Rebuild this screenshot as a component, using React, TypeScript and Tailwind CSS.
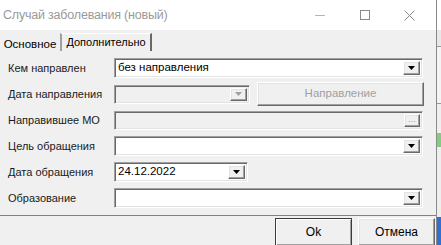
const font = "font-['Liberation_Sans',Arial,sans-serif]";

const sunken =
  "border border-t-[#a0a0a0] border-l-[#a0a0a0] border-b-[#ffffff] border-r-[#ffffff] shadow-[inset_1px_1px_0_#696969,inset_-1px_-1px_0_#e3e3e3]";

const raised =
  "border border-t-[#ffffff] border-l-[#ffffff] border-b-[#696969] border-r-[#696969] shadow-[inset_-1px_-1px_0_#a0a0a0,inset_1px_1px_0_#e3e3e3] bg-[#f0f0f0]";

function Arrow({ disabled }: { disabled?: boolean }) {
  return (
    <svg width="7" height="4" viewBox="0 0 7 4">
      <path d="M0 0h7L3.5 4z" fill={disabled ? "#a0a0a0" : "#000"} />
    </svg>
  );
}

function DropBtn({ disabled }: { disabled?: boolean }) {
  return (
    <div className={`${raised} flex h-full w-[17px] shrink-0 items-center justify-center`}>
      <Arrow disabled={disabled} />
    </div>
  );
}

function Combo({
  value,
  className,
  disabled,
}: {
  value?: string;
  className?: string;
  disabled?: boolean;
}) {
  return (
    <div
      className={`${sunken} ${className} flex items-stretch p-[2px] ${
        disabled ? "bg-[#f0f0f0]" : "bg-white"
      }`}
    >
      <div className="flex flex-1 items-center pl-[1px] text-[11.5px] leading-none text-black">
        {value}
      </div>
      <DropBtn disabled={disabled} />
    </div>
  );
}

function Row({ label, children }: { label: string; children: React.ReactNode }) {
  return (
    <div className="flex h-[26px] items-center">
      <div className="w-[114px] shrink-0 pl-[8px] text-[11px] text-[#1a1a1a]">{label}</div>
      {children}
    </div>
  );
}

export default function App() {
  return (
    <div className={`${font} flex h-[245px] w-[441px] overflow-hidden bg-[#f0f0f0]`}>
      <div className="flex w-[437px] shrink-0 flex-col border-r border-[#8a8a8a]">
        {/* title bar */}
        <div className="flex h-[30px] shrink-0 items-center bg-white">
          <span className="pl-[3px] text-[12.5px] tracking-[-0.2px] text-[#9a9a9a]">
            Случай заболевания (новый)
          </span>
          <div className="ml-auto flex h-full items-center pr-[4px]">
            <div className="flex w-[45px] justify-center">
              <div className="h-px w-[10px] bg-[#b5b5b5]" />
            </div>
            <div className="flex w-[45px] justify-center">
              <div className="h-[10px] w-[10px] border border-[#8a8a8a]" />
            </div>
            <div className="flex w-[45px] justify-center">
              <svg width="11" height="11" viewBox="0 0 11 11">
                <path d="M0.5 0.5l10 10M10.5 0.5l-10 10" stroke="#8a8a8a" strokeWidth="1" />
              </svg>
            </div>
          </div>
        </div>

        {/* tabs */}
        <div className="flex h-[25px] shrink-0 items-end">
          <div className="flex h-[24px] w-[60px] items-start justify-center pt-[5px] text-[11.5px] text-black">
            Основное
          </div>
          <div className="mb-[4px] flex h-[18px] w-[92px] items-center justify-center border-l-2 border-r-2 border-t border-l-[#a0a0a0] border-r-[#696969] border-t-white text-[11px] text-black">
            Дополнительно
          </div>
        </div>

        {/* form */}
        <div className="flex flex-col">
          <Row label="Кем направлен">
            <Combo value="без направления" className="h-[20px] w-[309px]" />
          </Row>
          <Row label="Дата направления">
            <Combo disabled className="h-[19px] w-[136px]" />
            <div
              className={`${raised} ml-[7px] flex h-[24px] w-[167px] items-center justify-center text-[11.5px] text-[#a0a0a0]`}
            >
              Направление
            </div>
          </Row>
          <Row label="Направившее МО">
            <div className={`${sunken} flex h-[19px] w-[309px] items-stretch bg-[#f0f0f0] p-[2px]`}>
              <div className="flex-1" />
              <div
                className={`${raised} flex w-[16px] items-end justify-center pb-[2px] text-[9px] leading-none text-[#a0a0a0]`}
              >
                ...
              </div>
            </div>
          </Row>
          <Row label="Цель обращения">
            <Combo className="h-[20px] w-[309px]" />
          </Row>
          <Row label="Дата обращения">
            <Combo value="24.12.2022" className="h-[20px] w-[134px]" />
          </Row>
          <Row label="Образование">
            <Combo className="h-[20px] w-[309px]" />
          </Row>
        </div>

        {/* footer */}
        <div className="mt-[4px] border-t border-[#808080]" />
        <div className="flex justify-end gap-[6px] pr-[1px] pt-[2px]">
          <div className="flex h-[28px] w-[77px] items-center justify-center border border-[#3c3c3c] bg-[#f0f0f0] text-[12px] text-black shadow-[inset_1px_1px_0_#ffffff,inset_-1px_-1px_0_#a0a0a0]">
            Ok
          </div>
          <div
            className={`${raised} flex h-[28px] w-[77px] items-center justify-center text-[12px] text-black`}
          >
            Отмена
          </div>
        </div>
      </div>

      {/* background application strip */}
      <div className="flex flex-1 flex-col">
        <div className="h-[30px] bg-white" />
        <div className="h-[16px] bg-[#e8e8e8]" />
        <div className="h-px bg-[#9a9a9a]" />
        <div className="h-[56px] bg-[#f4f4f4]" />
        <div className="h-px bg-[#9a9a9a]" />
        <div className="h-[29px] bg-[#efefef]" />
        <div className="h-[14px] bg-[#7fcf7f]" />
        <div className="h-[70px] bg-[#eeeeee]" />
        <div className="flex-1 bg-[#2f6fd0]" />
      </div>
    </div>
  );
}
